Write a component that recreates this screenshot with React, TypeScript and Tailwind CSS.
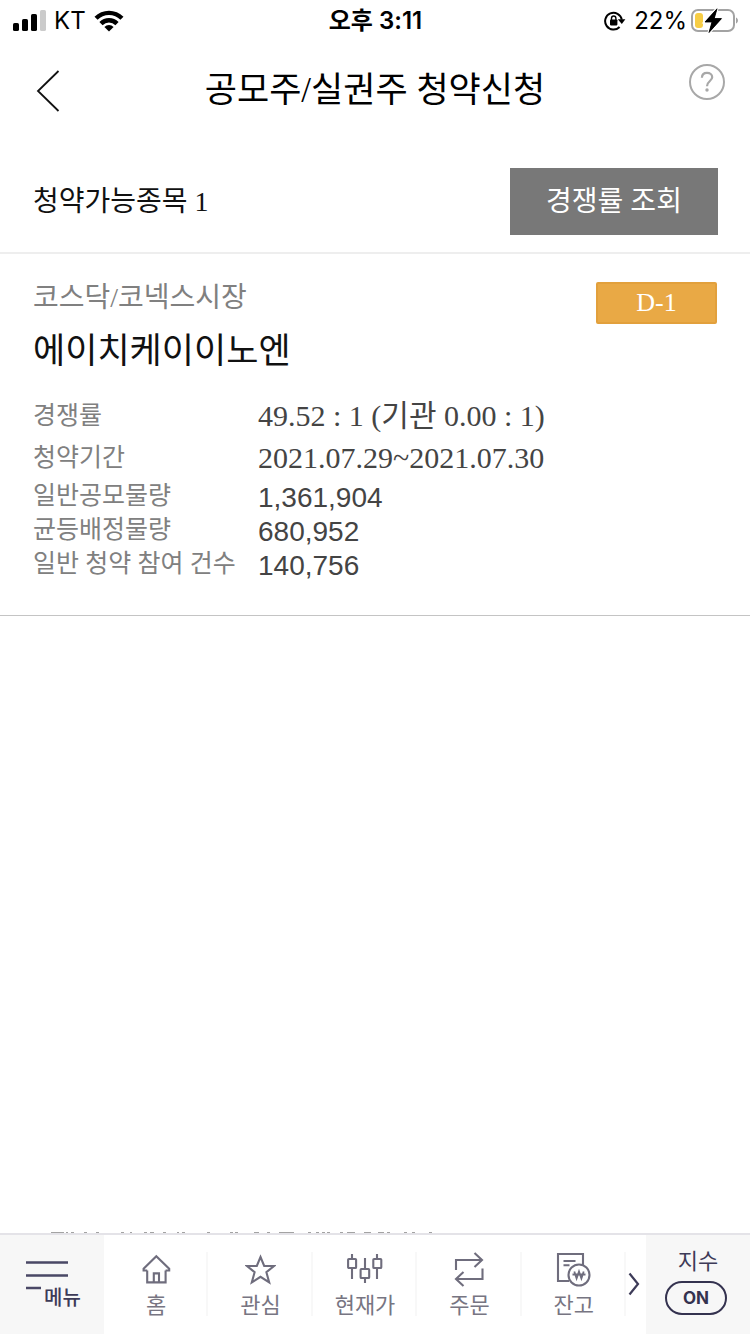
import React, { useState } from "react";

type Detail = { label: string; value: string; tall?: boolean };

const details: Detail[] = [
  { label: "경쟁률", value: "49.52 : 1 (기관 0.00 : 1)", tall: true },
  { label: "청약기간", value: "2021.07.29~2021.07.30", tall: true },
  { label: "일반공모물량", value: "1,361,904" },
  { label: "균등배정물량", value: "680,952" },
  { label: "일반 청약 참여 건수", value: "140,756" },
];

function StatusBar() {
  return (
    <div className="grid h-[41px] grid-cols-3 items-center pr-[11px] pl-3 font-['Inter','Noto_Sans_CJK_KR',sans-serif] text-[24px] leading-8 text-black">
      <div className="flex items-center gap-2">
        <svg width="34" height="22" viewBox="0 0 34 22" aria-hidden="true">
          <rect x="1" y="13" width="6" height="8" rx="1.6" />
          <rect x="10" y="9" width="6" height="12" rx="1.6" />
          <rect x="19" y="4" width="6" height="17" rx="1.6" />
          <rect x="28" y="0" width="6" height="21" rx="1.6" fill="#cbcbcb" />
        </svg>
        <span>KT</span>
        <svg width="30" height="22" viewBox="0 0 30 22" aria-hidden="true">
          <path d="M0.5 6.7A20.5 20.5 0 0 1 29.5 6.7L26.4 9.8A16.1 16.1 0 0 0 3.6 9.8Z" />
          <path d="M5.4 12A13.3 13.3 0 0 1 24.6 12L21.4 15.2A9 9 0 0 0 8.6 15.2Z" />
          <path d="M10.4 17A6.3 6.3 0 0 1 19.6 17L15 21.6Z" />
        </svg>
      </div>
      <div className="text-center font-semibold">오후 3:11</div>
      <div className="flex items-center justify-end gap-1">
        <svg className="mr-1" width="22" height="20" viewBox="0 0 22 20" aria-hidden="true">
          <path d="M15.6 16A8.4 8.4 0 1 1 17.8 8.6" fill="none" stroke="#000" strokeWidth="2" />
          <path d="M13.8 8.2H21.4L17.8 13Z" />
          <rect x="6" y="8.4" width="7.4" height="6" rx="0.8" />
          <path d="M7.5 9V7.2a2.2 2.2 0 0 1 4.4 0V9" fill="none" stroke="#000" strokeWidth="1.4" />
        </svg>
        <span>22%</span>
        <svg width="48" height="26" viewBox="0 0 48 26" aria-hidden="true">
          <rect x="1" y="2" width="42" height="21" rx="6" fill="none" stroke="#a3a3a3" strokeWidth="2" />
          <path d="M45 9.5c2.6 0.8 2.6 5.2 0 6Z" fill="#a3a3a3" />
          <rect x="4" y="5" width="8" height="15" rx="3" fill="#f7cd45" />
          <path
            d="M26 0.8L14 14H21L18 24.5L30.5 10.6H23.2Z"
            fill="#000"
            stroke="#fff"
            strokeWidth="3"
            paintOrder="stroke"
          />
          <path d="M26 0.8L14 14H21L18 24.5L30.5 10.6H23.2Z" stroke="#000" strokeWidth="0.8" />
        </svg>
      </div>
    </div>
  );
}

function TitleBar() {
  return (
    <header className="grid h-[100px] grid-cols-[60px_1fr_60px] items-center px-6 text-black">
      <button type="button" aria-label="뒤로" className="flex h-12 w-12 items-center justify-center">
        <svg width="24" height="42" viewBox="0 0 24 42" fill="none" stroke="#111" strokeWidth="1.8" aria-hidden="true">
          <path d="M22.5 1L2 21L22.5 41" />
        </svg>
      </button>
      <h1 className="text-center text-[35px] leading-[52px]">공모주/실권주 청약신청</h1>
      <button type="button" aria-label="도움말" className="mb-[18px] flex justify-end">
        <svg width="38" height="38" viewBox="0 0 38 38" fill="none" stroke="#a8a8a8" aria-hidden="true">
          <circle cx="19" cy="19" r="17" strokeWidth="2" />
          <path d="M13.9 14.8C14 11.6 16.2 9.9 19 9.9C22 9.9 24.2 11.6 24.2 14.3C24.2 18 19 18.2 19 23.2" strokeWidth="2.2" />
          <circle cx="19" cy="27" r="1.7" fill="#a8a8a8" stroke="none" />
        </svg>
      </button>
    </header>
  );
}

function HomeIcon() {
  return (
    <>
      <path d="M5.2 16.5V28.4H23.6V16.5" />
      <path d="M5.2 16.5H1.6V14.8L14.3 2.2L27.2 14.8V16.5H23.6" />
      <path d="M11.8 28V19.4H17V28" />
    </>
  );
}

function StarIcon() {
  return <path d="M15.5 3L19.2 12H29L21.4 18.2L24.2 28.4L15.5 22.8L6.8 28.4L9.6 18.2L2 12H11.8Z" />;
}

function CandleIcon() {
  return (
    <>
      <path d="M5 1V6M5 15V26M18 5V16M18 25V30M30 1V6M30 15V26" />
      <rect x="1.1" y="6" width="8" height="9" rx="0.8" />
      <rect x="13.6" y="16" width="8.6" height="9" rx="0.8" />
      <rect x="26.3" y="6" width="8" height="9" rx="0.8" />
    </>
  );
}

function OrderIcon() {
  return (
    <>
      <path d="M2 18V8H27M20.5 1L28 8L20.5 15" />
      <path d="M28.5 16.5V27H3M9.5 20L2 27L9.5 34" />
    </>
  );
}

function BalanceIcon() {
  return (
    <>
      <path d="M13 29H2V2H27V13M7.5 9H19.5M7.5 13.2H13.5" />
      <circle cx="23" cy="23" r="10.5" />
      <path d="M18.3 19.5L20.6 26.5L23 19.5L25.4 26.5L27.7 19.5M16.5 22.5H29.5" strokeWidth="1.8" />
    </>
  );
}

const tabs = [
  { label: "홈", box: "0 0 29 31", w: 29, h: 31, icon: <HomeIcon /> },
  { label: "관심", box: "0 0 31 31", w: 31, h: 31, icon: <StarIcon /> },
  { label: "현재가", box: "0 0 36 33", w: 36, h: 33, icon: <CandleIcon /> },
  { label: "주문", box: "0 0 31 35", w: 31, h: 35, icon: <OrderIcon /> },
  { label: "잔고", box: "0 0 35 35", w: 35, h: 35, icon: <BalanceIcon /> },
];

function HiddenRowEdge() {
  return (
    <svg className="block" width="450" height="1" viewBox="0 0 450 1" stroke="#a3a3a3" strokeWidth="1" aria-hidden="true">
      <path d="M51 .5H64M66 .5H68M71 .5H74M84 .5H87M96 .5H99M121 .5H124M130 .5H132M144 .5H147M150 .5H154M163 .5H166M177 .5H179M182 .5H185M207 .5H210M230 .5H233M235 .5H238M254 .5H259M267 .5H270M279 .5H294M308 .5H311M316 .5H319M322 .5H325M327 .5H330M340 .5H343M347 .5H355M364 .5H371M378 .5H384M387 .5H390M404 .5H407M412 .5H415M429 .5H432" />
    </svg>
  );
}

function BottomNav() {
  const [on, setOn] = useState(true);
  return (
    <nav className="flex h-[101px] border-t-2 border-[#e4e3e8] bg-white font-['Inter','Noto_Sans_CJK_KR',sans-serif] text-[#777582]">
      <button type="button" className="flex w-[104px] shrink-0 flex-col bg-[#f7f7f7] pt-6 pl-6 text-left text-[#3d3b58]">
        <svg width="44" height="32" viewBox="0 0 44 32" stroke="#4a4866" strokeWidth="2.4" aria-hidden="true">
          <path d="M2 3.5H44M2 16.5H44M2 29H17" />
        </svg>
        <span className="-mt-1 ml-5 text-[20px] leading-[22px] font-medium">메뉴</span>
      </button>
      <div className="flex flex-1 items-center pb-0.5">
        {tabs.map((tab) => (
          <a
            key={tab.label}
            href="#"
            className="flex h-16 flex-1 flex-col items-center border-r-2 border-[#f8f8f8] pl-0.5"
          >
            <span className="flex h-[35px] shrink-0 items-center justify-center">
              <svg
                width={tab.w}
                height={tab.h}
                viewBox={tab.box}
                fill="none"
                stroke="#6f6d7d"
                strokeWidth="2.1"
                aria-hidden="true"
              >
                {tab.icon}
              </svg>
            </span>
            <span className="mt-0.5 text-[22px] leading-8">{tab.label}</span>
          </a>
        ))}
        <button type="button" aria-label="다음 메뉴" className="flex h-16 w-[20px] items-center justify-start pl-0.5">
          <svg width="12" height="24" viewBox="0 0 12 24" fill="none" stroke="#3d3b58" strokeWidth="2.2" aria-hidden="true">
            <path d="M1.5 1.5L10 12L1.5 22.5" />
          </svg>
        </button>
      </div>
      <div className="flex w-[104px] shrink-0 flex-col items-center bg-[#f7f7f7] pt-2.5 text-[#3d3b58]">
        <span id="index-label" className="text-[22px] leading-8">지수</span>
        <button
          type="button"
          aria-labelledby="index-label"
          aria-pressed={on}
          onClick={() => setOn(!on)}
          className="mt-1 mr-1 h-[34px] w-[62px] rounded-full border-2 border-[#34324f] text-[17px] leading-7 font-bold text-[#34324f]"
        >
          {on ? "ON" : "OFF"}
        </button>
      </div>
    </nav>
  );
}

export default function App() {
  return (
    <div className="flex min-h-screen flex-col bg-white font-['Liberation_Serif','Noto_Sans_CJK_KR',serif]">
      <StatusBar />
      <TitleBar />
      <main className="flex-1">
        <section className="mt-[11px] flex items-center justify-between border-b-2 border-[#eeeeee] pt-4 pr-8 pb-[17px] pl-[33px]">
          <h2 className="text-[28px] leading-10 text-[#111]">청약가능종목 1</h2>
          <button type="button" className="h-[67px] w-[208px] bg-[#787878] text-[28px] leading-10 text-white">
            경쟁률 조회
          </button>
        </section>
        <article className="border-b border-[#c4c4c4] pt-6 pr-[33px] pb-[33px] pl-[33px]">
          <div className="flex items-start justify-between">
            <p className="text-[28px] leading-10 text-[#808080]">코스닥/코넥스시장</p>
            <span className="mt-1 flex h-[42px] w-[121px] items-center justify-center rounded-xs border-2 border-[#e2a03c] bg-[#e9a945] text-[26px] leading-8 text-white">
              D-1
            </span>
          </div>
          <h3 className="text-[35px] leading-[56px] text-[#111]">에이치케이이노엔</h3>
          <dl className="mt-4">
            {details.map((row) => (
              <div
                key={row.label}
                className={row.tall ? "flex h-[42px] items-start" : "flex h-[34px] items-start"}
              >
                <dt
                  className={
                    row.tall
                      ? "w-[225px] shrink-0 text-[25px] leading-10 whitespace-nowrap text-[#808080]"
                      : "w-[225px] shrink-0 text-[25px] leading-8 whitespace-nowrap text-[#808080]"
                  }
                >
                  {row.label}
                </dt>
                <dd
                  className={
                    row.tall
                      ? "text-[30px] leading-10 text-[#444]"
                      : "font-['Liberation_Sans',sans-serif] text-[28px] leading-9 text-[#444]"
                  }
                >
                  {row.value}
                </dd>
              </div>
            ))}
          </dl>
        </article>
      </main>
      <HiddenRowEdge />
      <BottomNav />
    </div>
  );
}
